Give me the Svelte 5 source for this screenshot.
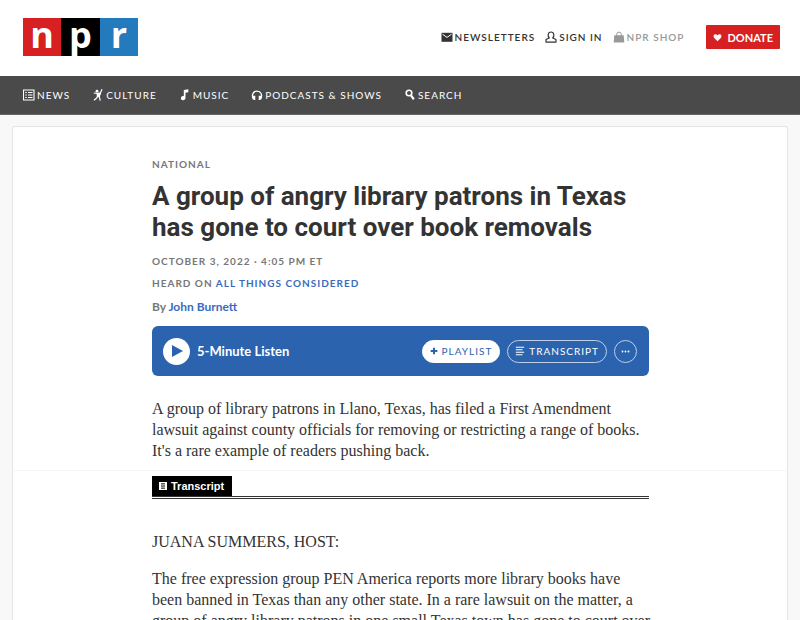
<script>
	const sections = [
		{ label: 'News', icon: 'news' },
		{ label: 'Culture', icon: 'culture' },
		{ label: 'Music', icon: 'music' },
		{ label: 'Podcasts & Shows', icon: 'podcasts' },
		{ label: 'Search', icon: 'search' }
	];

	let playing = $state(false);
</script>

{#snippet icon(name)}
	<svg class="icon {name}" viewBox="0 0 12 12" aria-hidden="true">
		{#if name === 'news'}
			<path d="M.5 1h10.5v10H.5z" fill="none" stroke="currentColor" stroke-width="1.1" />
			<path
				d="M2.3 3.5h1.5M5 3.5h4.5M2.3 6h1.5M5 6h4.5M2.3 8.5h1.5M5 8.5h4.5"
				stroke="currentColor"
				stroke-width="1.1"
			/>
		{:else if name === 'culture'}
			<circle cx="5" cy="2.2" r="1.4" fill="currentColor" />
			<path
				d="M10 .3 8 5 7.2 7.1l1 4.5M8 4.7 1.8 4M6 6.5 4.6 9 2 11.2"
				fill="none"
				stroke="currentColor"
				stroke-width="1.2"
			/>
			<path d="M4.4 4.1 9 3.5 7.7 8 5 8.2z" fill="currentColor" />
		{:else if name === 'music'}
			<path d="M4.8 1 9.3.3v3l-2.8.5v5.3a2.3 2.1 0 1 1-1.7-2z" fill="currentColor" />
		{:else if name === 'podcasts'}
			<path
				d="M2.3 9.8C.2 6 2.2 2.2 6 2.2s5.8 3.8 3.7 7.6"
				fill="none"
				stroke="currentColor"
				stroke-width="1.3"
			/>
			<path d="M2 6.8h2.3v4.2H3L1.5 10zM10 6.8H7.7v4.2H9l1.5-1z" fill="currentColor" />
		{:else if name === 'search'}
			<circle cx="5" cy="4" r="2.8" fill="none" stroke="currentColor" stroke-width="1.6" />
			<path d="m7 6.4 2.8 4" stroke="currentColor" stroke-width="2.2" />
		{:else if name === 'mail'}
			<path d="M.5 1.8h11v9H.5z" fill="currentColor" />
			<path d="m1.5 3.2 4.5 3.2 4.5-3.2" fill="none" stroke="#fff" stroke-width="1" />
		{:else if name === 'user'}
			<path
				d="M4.3 7C2.4 5 2.8 1 6 1s3.6 4 1.7 6l3.3 1.5v2.6H1V8.5z"
				fill="none"
				stroke="currentColor"
				stroke-width="1.2"
				stroke-linejoin="round"
			/>
		{:else if name === 'shop'}
			<path d="M1.3 4.3h9.4l.6 7.2H.7z" fill="currentColor" />
			<path d="M3.7 6V3.4a2.3 2.3 0 0 1 4.6 0V6" fill="none" stroke="currentColor" />
		{:else if name === 'heart'}
			<path
				d="M6 11 1.6 6.5C-.2 4 1 1.5 3.2 1.5 4.6 1.5 5.5 2.3 6 3.2c.5-.9 1.4-1.7 2.8-1.7 2.2 0 3.4 2.5 1.6 5z"
				fill="currentColor"
			/>
		{:else if name === 'plus'}
			<path d="M6 1v10M1 6h10" stroke="currentColor" stroke-width="3" />
		{:else if name === 'lines'}
			<path d="M1 1.5h10M1 4.5h8M1 7.5h10M1 10.5h8" stroke="currentColor" stroke-width="1.4" />
		{:else if name === 'page'}
			<path d="M0 0h12v12H0z" fill="currentColor" />
			<path d="M3 2.8h6M3 6h6M3 9.2h6" stroke="#000" stroke-width="1.5" />
		{:else if name === 'play'}
			<path d="M1 0v12l11-6z" fill="currentColor" />
		{:else if name === 'dots'}
			<circle cx="2" cy="6" r="1.2" fill="currentColor" />
			<circle cx="6" cy="6" r="1.2" fill="currentColor" />
			<circle cx="10" cy="6" r="1.2" fill="currentColor" />
		{/if}
	</svg>
{/snippet}

<header class="masthead">
	<a class="logo" href="#home" aria-label="NPR home">
		<span class="red">n</span><span class="black">p</span><span class="blue">r</span>
	</a>
	<div class="account">
		<a href="#newsletters">{@render icon('mail')}Newsletters</a>
		<a href="#signin">{@render icon('user')}Sign in</a>
		<a class="muted" href="#shop">{@render icon('shop')}NPR Shop</a>
		<a class="donate" href="#donate">{@render icon('heart')}Donate</a>
	</div>
</header>

<nav>
	{#each sections as section}
		<a href="#{section.icon}">{@render icon(section.icon)}{section.label}</a>
	{/each}
</nav>

<main>
	<article class="panel story">
		<a class="slug" href="#national">National</a>
		<h1>A group of angry library patrons in Texas has gone to court over book removals</h1>
		<p class="meta date">October 3, 2022 · 4:05 PM ET</p>
		<p class="meta program">Heard on <a href="#atc">All Things Considered</a></p>
		<p class="byline">By <a href="#burnett">John Burnett</a></p>

		<div class="player">
			<button
				class="play-btn"
				aria-label="Play"
				aria-pressed={playing}
				onclick={() => (playing = !playing)}>{@render icon('play')}</button
			>
			<b>5-Minute Listen</b>
			<button class="pill solid">{@render icon('plus')}Playlist</button>
			<a class="pill" href="#transcript">{@render icon('lines')}Transcript</a>
			<button class="pill more" aria-label="More options">{@render icon('dots')}</button>
		</div>

		<p class="text">
			A group of library patrons in Llano, Texas, has filed a First Amendment lawsuit against county
			officials for removing or restricting a range of books. It's a rare example of readers pushing
			back.
		</p>
	</article>

	<section class="panel transcript" id="transcript">
		<div class="tab-row">
			<h2>{@render icon('page')}Transcript</h2>
		</div>
		<p class="text">JUANA SUMMERS, HOST:</p>
		<p class="text">
			The free expression group PEN America reports more library books have been banned in Texas than
			any other state. In a rare lawsuit on the matter, a group of angry library patrons in one small
			Texas town has gone to court over
		</p>
	</section>
</main>

<style>
	:global(body) {
		margin: 0;
		background: #f8f8f8;
		color: #333;
		font-family: Lato, 'Open Sans', sans-serif;
	}

	a {
		color: #3a6bbf;
		text-decoration: none;
	}

	p,
	h1,
	h2 {
		margin: 0;
	}

	.icon {
		flex: none;
		width: 12px;
		height: 12px;
	}

	/* ----- HEADER ----- */
	.masthead {
		display: flex;
		align-items: center;
		justify-content: space-between;
		height: 76px;
		padding: 0 20px 2px 23px;
		box-sizing: border-box;
		background: #fff;
	}

	.logo {
		display: flex;
		width: 115px;
		font: bold 36px/34px 'Open Sans', sans-serif;
	}

	.logo span {
		flex: 1;
		height: 38px;
		color: #fff;
		text-align: center;
	}

	.red {
		background: #d62021;
	}

	.black {
		background: #000;
	}

	.blue {
		background: #237bbd;
	}

	.account {
		display: flex;
		align-items: center;
		gap: 10px;
		font-size: 10px;
		font-weight: 600;
		letter-spacing: 1px;
		text-transform: uppercase;
	}

	.account a {
		display: flex;
		align-items: center;
		gap: 2px;
		color: #333;
	}

	.account .muted {
		color: #999;
	}

	.account .donate {
		gap: 5px;
		height: 24px;
		margin-left: 12px;
		padding: 0 7px;
		border-radius: 1px;
		background: #d62021;
		color: #fff;
		font-size: 11px;
		font-weight: bold;
		letter-spacing: 0;
	}

	.heart {
		width: 9px;
		height: 9px;
	}

	nav {
		display: flex;
		align-items: center;
		gap: 22px;
		height: 38px;
		padding: 0 23px;
		border-bottom: 1px solid #666;
		background: #4a4a4a;
		font-size: 10px;
		letter-spacing: 1px;
		text-transform: uppercase;
	}

	nav a {
		display: flex;
		align-items: center;
		gap: 2px;
		color: #fff;
	}

	/* ----- STORY ----- */
	main {
		padding: 11px 12px 0;
	}

	.panel {
		padding: 0 138px 0 139px;
		border: 1px solid #e4e4e4;
		background: #fff;
	}

	.story {
		padding-top: 29px;
		padding-bottom: 9px;
		border-bottom-color: #f4f4f4;
		border-radius: 3px 3px 0 0;
	}

	.slug,
	.meta {
		display: block;
		color: #777;
		font-size: 10px;
		line-height: 16px;
		font-weight: bold;
		letter-spacing: 1px;
		text-transform: uppercase;
	}

	h1 {
		margin-top: 9px;
		font: bold 26px/31px Roboto, sans-serif;
	}

	.date {
		margin-top: 10px;
	}

	.program {
		margin-top: 6px;
	}

	.byline {
		margin-top: 8px;
		color: #777;
		font-size: 12px;
		line-height: 16px;
		font-weight: bold;
	}

	.player {
		display: flex;
		align-items: center;
		gap: 7px;
		height: 50px;
		margin: 11px 0 22px;
		padding: 0 12px 0 11px;
		box-sizing: border-box;
		border-radius: 6px;
		background: #2b63ae;
		color: #fff;
	}

	.player b {
		flex: 1;
		font-size: 13px;
	}

	button {
		border: 0;
		font: inherit;
		cursor: pointer;
	}

	.play-btn {
		display: flex;
		align-items: center;
		justify-content: center;
		width: 27px;
		height: 27px;
		padding: 0 0 0 1px;
		border-radius: 50%;
		background: #fff;
		color: #2b63ae;
	}

	.pill {
		display: flex;
		align-items: center;
		justify-content: center;
		gap: 4px;
		height: 23px;
		padding: 0 7px;
		box-sizing: border-box;
		border: 1px solid #bfd0e8;
		border-radius: 12px;
		background: none;
		color: #fff;
		font-size: 10px;
		letter-spacing: 1px;
		text-transform: uppercase;
	}

	.solid {
		border-color: #fff;
		background: #fff;
		color: #2b63ae;
	}

	.plus {
		width: 8px;
		height: 8px;
	}

	.lines {
		width: 10px;
		height: 10px;
	}

	.more {
		width: 23px;
		padding: 0;
	}

	.dots {
		width: 9px;
		height: 9px;
	}

	.text {
		margin-right: -3px;
		font: 16px/21px 'Liberation Serif', serif;
	}

	/* ----- TRANSCRIPT ----- */
	.transcript {
		padding-top: 5px;
		border-top: 0;
	}

	.tab-row {
		display: flex;
		margin-bottom: 32px;
		border-bottom: 3px double #333;
	}

	h2 {
		display: flex;
		align-items: center;
		gap: 4px;
		padding: 0 8px 0 7px;
		background: #000;
		color: #fff;
		font: bold 11px/20px 'Liberation Sans', sans-serif;
	}

	.page {
		width: 8px;
		height: 8px;
	}

	.text + .text {
		margin-top: 16px;
	}
</style>
